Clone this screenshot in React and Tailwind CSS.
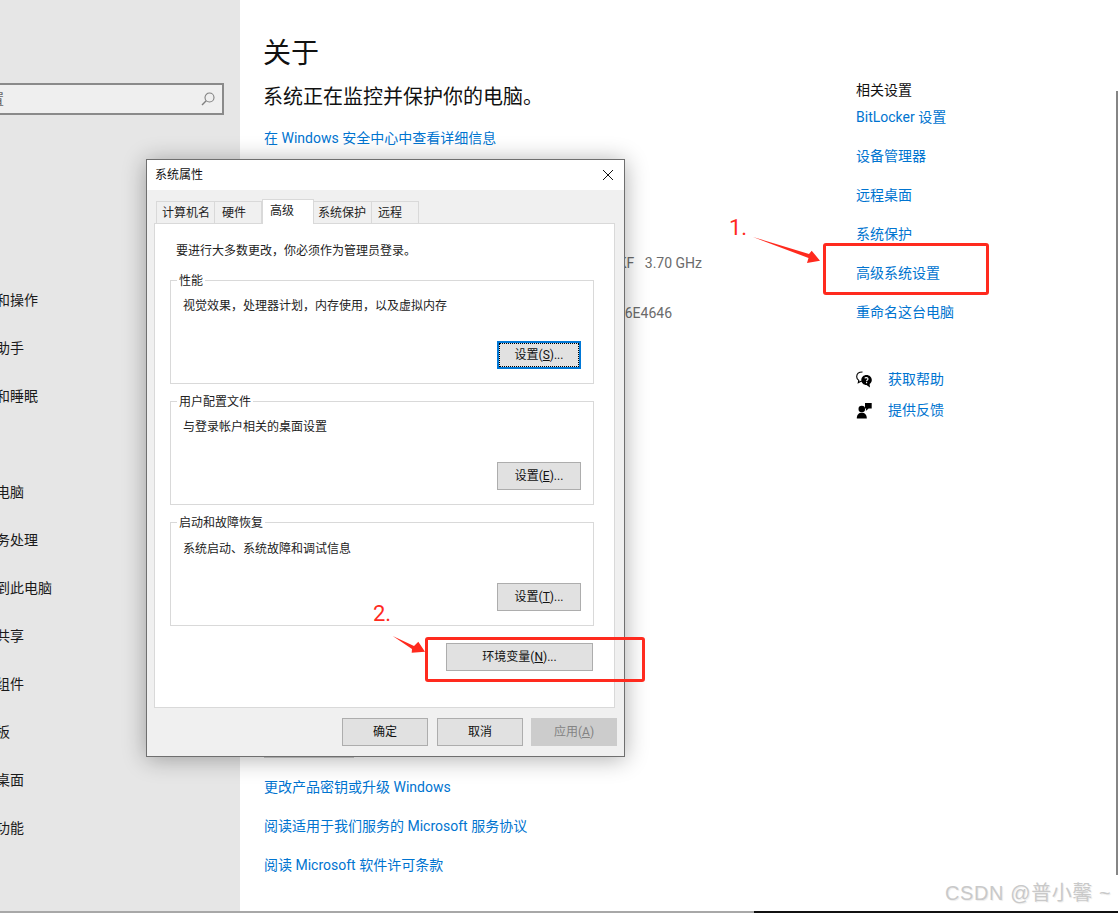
import React from "react";

const navItems = ["显示", "声音", "通知和操作", "专注助手", "电源和睡眠", "存储", "平板电脑", "多任务处理", "投影到此电脑", "体验共享", "系统组件", "剪贴板", "远程桌面", "可选功能"];
const related = ["设备管理器", "远程桌面", "系统保护", "高级系统设置", "重命名这台电脑"];

function WinButton({ children, className = "" }) {
  return (
    <button className={`h-7 border border-[#adadad] bg-[#e1e1e1] text-[12px] leading-none text-[#111] ${className}`}>
      {children}
    </button>
  );
}

function Group({ title, desc, hotkey, focused, descClass = "" }) {
  return (
    <div className="relative h-[104px] border border-[#d9d9d9]">
      <span className="absolute left-[6px] top-[-9px] bg-white px-[2px] text-[12px] leading-[18px] text-[#222]">{title}</span>
      <p className={`pl-[12px] text-[12px] leading-[18px] text-[#222] ${descClass}`}>{desc}</p>
      <div className="absolute right-[12px] bottom-[14px] flex">
        {focused ? (
          <button className="h-7 w-[84px] border-2 border-[#0078d7] bg-[#e1e1e1] p-0 text-[12px] leading-none text-[#111]">
            <span className="flex h-full w-full items-center justify-center border border-dotted border-black">
              设置(<u>{hotkey}</u>)...
            </span>
          </button>
        ) : (
          <WinButton className="w-[84px]">
            设置(<u>{hotkey}</u>)...
          </WinButton>
        )}
      </div>
    </div>
  );
}

function Tab({ children, w, active }) {
  return active ? (
    <div className={`relative z-10 mb-[-1px] flex h-[25px] items-center border border-b-0 border-[#d9d9d9] bg-white pb-[2px] text-[12px] text-[#222] ${w}`}>
      {children}
    </div>
  ) : (
    <div className={`flex h-[22px] items-center border border-l-0 border-b-0 border-[#d9d9d9] bg-[#f0f0f0] text-[12px] text-[#222] first:border-l ${w}`}>
      {children}
    </div>
  );
}

function Dialog() {
  return (
    <div className="absolute left-[146px] top-[159px] z-20 flex h-[598px] w-[479px] flex-col border border-[#6f6f6f] bg-[#f0f0f0] shadow-[0_2px_22px_rgba(0,0,0,0.32)]">
      <div className="flex h-[30px] items-center justify-between bg-white pl-[8px] pr-[9px]">
        <span className="text-[12px] text-[#111]">系统属性</span>
        <svg width="12" height="12" viewBox="0 0 12 12" className="mr-[1px]">
          <path d="M1 1 L11 11 M11 1 L1 11" stroke="#111" strokeWidth="1" fill="none" />
        </svg>
      </div>
      <div className="flex items-end pl-[9px] pt-[9px]">
        <Tab w="w-[59px] pl-[5px]">计算机名</Tab>
        <Tab w="w-[47px] pl-[7px]">硬件</Tab>
        <Tab w="w-[52px] pl-[7px]" active>高级</Tab>
        <Tab w="w-[58px] pl-[4px]">系统保护</Tab>
        <Tab w="w-[47px] pl-[6px]">远程</Tab>
      </div>
      <div className="ml-[7px] h-[485px] w-[461px] border border-[#d9d9d9] bg-white">
        <p className="pl-[21px] pt-[18px] text-[12px] leading-[18px] text-[#222]">要进行大多数更改，你必须作为管理员登录。</p>
        <div className="ml-[15px] mt-[20px] flex w-[424px] flex-col gap-[17px]">
          <Group title="性能" desc="视觉效果，处理器计划，内存使用，以及虚拟内存" hotkey="S" focused descClass="pt-[16px]" />
          <Group title="用户配置文件" desc="与登录帐户相关的桌面设置" hotkey="E" descClass="pt-[16px]" />
          <Group title="启动和故障恢复" desc="系统启动、系统故障和调试信息" hotkey="T" descClass="pt-[17px]" />
        </div>
        <div className="flex justify-end pr-[21px] pt-[17px]">
          <WinButton className="w-[147px]">
            环境变量(<u>N</u>)...
          </WinButton>
        </div>
      </div>
      <div className="flex justify-end pr-[7px] pt-[10px]">
        <WinButton className="w-[86px]">确定</WinButton>
        <WinButton className="ml-[9px] w-[86px]">取消</WinButton>
        <button className="ml-[8px] h-7 w-[86px] border border-[#cccccc] bg-[#cccccc] text-[12px] leading-none text-[#838383]">
          应用(<u>A</u>)
        </button>
      </div>
    </div>
  );
}

export default function App() {
  return (
    <div
      className="relative h-[913px] w-[1118px] overflow-hidden bg-white"
      style={{ fontFamily: 'Roboto, "Noto Sans CJK SC", sans-serif' }}
    >
      <div className="flex h-[911px]">
        <aside className="h-full w-[240px] shrink-0 overflow-hidden bg-[#e6e6e6]">
          <div className="ml-[-54px] mt-[83px] flex h-[32px] w-[278px] items-center justify-between border-2 border-[#8a8a8a] bg-[#efefef] pr-[6px]">
            <span className="text-[14px] text-[#666]">查找设置</span>
            <svg width="16" height="16" viewBox="0 0 16 16" fill="none" stroke="#808080" strokeWidth="1.1">
              <circle cx="9.5" cy="6.5" r="4.5" />
              <path d="M6.2 9.8 L2 14" strokeWidth="1.4" />
            </svg>
          </div>
          <ul className="ml-[-32px] mt-[65px] w-[272px]">
            {navItems.map((t) => (
              <li key={t} className="flex h-12 items-center text-[14px] text-[#1a1a1a]">{t}</li>
            ))}
          </ul>
        </aside>

        <main className="w-[592px] shrink-0 pl-[24px]">
          <h1 className="ml-[-1px] pt-[34px] text-[28px] leading-[40px] text-[#111]">关于</h1>
          <p className="ml-[-1px] mt-[9px] text-[20px] leading-[28px] text-[#111]">系统正在监控并保护你的电脑。</p>
          <a className="mt-[17px] block text-[14px] leading-[20px] text-[#0074d0]">在 Windows 安全中心中查看详细信息</a>
          <div className="mt-[105px] flex w-[438px] justify-between text-[14px] leading-[20px] text-[#6b6b6b]">
            <span>处理器</span>
            <span className="whitespace-pre">Intel(R) Core(TM) i5-9600KF   3.70 GHz</span>
          </div>
          <div className="mt-[30px] flex w-[408px] justify-between text-[14px] leading-[20px] text-[#6b6b6b]">
            <span>设备 ID</span>
            <span>36E4646</span>
          </div>
          <div className="mt-[403px] h-[32px] w-[90px] bg-[#cccccc]" />
          <a className="mt-[19px] block text-[14px] leading-[20px] text-[#0074d0]">更改产品密钥或升级 Windows</a>
          <a className="mt-[19px] block text-[14px] leading-[20px] text-[#0074d0]">阅读适用于我们服务的 Microsoft 服务协议</a>
          <a className="mt-[19px] block text-[14px] leading-[20px] text-[#0074d0]">阅读 Microsoft 软件许可条款</a>
        </main>

        <section className="pl-[24px] pt-[80px] text-[14px] leading-[20px]">
          <h2 className="text-[#111]">相关设置</h2>
          <a className="mt-[7px] block text-[#0074d0]">BitLocker 设置</a>
          <div className="mt-[19px] flex flex-col gap-[19px]">
            {related.map((t) => (
              <a key={t} className="block text-[#0074d0]">{t}</a>
            ))}
          </div>
          <div className="mt-[47px] flex items-center gap-[15px]">
            <svg width="17" height="17" viewBox="0 0 17 17">
              <path d="M6.5 1 C3 1 .7 3 .7 5.7 C.7 7.3 1.5 8.6 2.8 9.4 L2.3 11.6 L5 10.2 L7 10.2" fill="white" stroke="#000" strokeWidth="1.1" />
              <path d="M10.5 4 C7.5 4 5.3 6.2 5.3 9 C5.3 11.8 7.5 14 10.5 14 L14 16.5 L13.6 13 C15 12 15.8 10.6 15.8 9 C15.8 6.2 13.5 4 10.5 4 Z" fill="#000" />
              <path d="M8.9 7.4 C9 6.4 11.9 6.2 12 7.9 C12 9 10.6 9 10.6 10.2 M10.6 11.1 L10.6 12.2" stroke="#fff" strokeWidth="1.1" fill="none" />
            </svg>
            <a className="text-[#0074d0]">获取帮助</a>
          </div>
          <div className="mt-[11px] flex items-center gap-[15px]">
            <svg width="17" height="17" viewBox="0 0 17 17" fill="#000">
              <circle cx="5.8" cy="7" r="3.3" />
              <path d="M.8 16.5 C.8 12.6 2.8 10.8 5.8 10.8 C8.8 10.8 10.8 12.6 10.8 16.5 Z" />
              <path d="M9 1 H15.7 V6.6 H12.6 L9.8 9 L10.2 6.6 H9 Z" />
            </svg>
            <a className="text-[#0074d0]">提供反馈</a>
          </div>
        </section>
      </div>

      <Dialog />

      <div className="absolute right-0 top-[91px] h-[784px] w-[2px] bg-[#858585]" />
      <div className="absolute inset-x-0 bottom-0 h-[2px] bg-[#a8a8a8]" />
      <div className="absolute bottom-0 left-[754px] right-0 h-[2px] bg-[#111]" />

      <div className="absolute left-[823px] top-[243px] z-30 h-[52px] w-[166px] rounded-[3px] border-[3px] border-[#ff2a1e]" />
      <div className="absolute left-[425px] top-[637px] z-30 h-[45px] w-[220px] rounded-[3px] border-[3px] border-[#ff2a1e]" />
      <span className="absolute left-[729px] top-[213px] z-30 text-[22px] leading-[30px] text-[#ff2a1e]">1.</span>
      <span className="absolute left-[373px] top-[599px] z-30 text-[22px] leading-[30px] text-[#ff2a1e]">2.</span>
      <svg className="absolute left-0 top-0 z-30" width="1118" height="913" fill="#ff2a1e">
        <polygon points="753,237 809,254 811.7,250.7 820,260.7 807,263 808.5,258" />
        <polygon points="392.7,636 414,646 418.3,641.7 425,651.7 411.7,652.7 412,649" />
      </svg>

      <span
        className="absolute left-[945px] top-[879px] z-30 text-[20px] leading-[28px] tracking-[0.6px] text-[#c9c9c9] [text-shadow:1px_1px_1px_rgba(0,0,0,0.08)]"
        style={{ fontFamily: '"Liberation Sans", "Noto Sans CJK SC", sans-serif' }}
      >
        CSDN @普小馨 ~
      </span>
    </div>
  );
}
